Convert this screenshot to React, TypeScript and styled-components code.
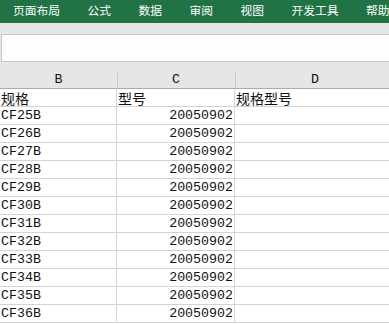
import styled, { createGlobalStyle } from 'styled-components';

const Global = createGlobalStyle`
  html, body {
    margin: 0;
    padding: 0;
    background: #ffffff;
    overflow: hidden;
  }
`;

const Page = styled.div`
  width: 389px;
  height: 324px;
  overflow: hidden;
  display: flex;
  flex-direction: column;
`;

const Ribbon = styled.div`
  height: 23px;
  background: #217346;
  display: flex;
  align-items: center;
  gap: 27.5px;
  padding-left: 13px;
  white-space: nowrap;
  overflow: hidden;
`;

const Tab = styled.span`
  color: #ffffff;
  font-family: "Noto Sans CJK SC", sans-serif;
  font-size: 11.75px;
  line-height: 14px;
  margin-top: -3px;
  flex-shrink: 0;
`;

const FormulaArea = styled.div`
  background: #e6e6e6;
  padding: 11px 0 9px 1px;
`;

const FormulaBox = styled.div`
  height: 26px;
  width: 400px;
  background: #fdfdfd;
  border: 1px solid #c6c6c6;
  border-right: none;
`;

const Grid = styled.div`
  display: grid;
  grid-template-columns: 117px 118px 160px;
  font-family: "Liberation Mono", "Noto Sans CJK SC", monospace;
  font-size: 13.3px;
  color: #111;
`;

const HeadCell = styled.div`
  height: 17px;
  background: #e6e6e6;
  border-bottom: 1px solid #ababab;
  display: flex;
  justify-content: center;
  align-items: flex-end;
  position: relative;
  line-height: 16px;
  &:not(:first-child)::before {
    content: "";
    position: absolute;
    left: 0;
    top: 2px;
    bottom: 0;
    width: 1px;
    background: #c8c8c8;
  }
`;

const Cell = styled.div<{ $num?: boolean }>`
  height: 17px;
  border-bottom: 1px solid #d4d4d4;
  border-right: 1px solid #d4d4d4;
  padding: 0 ${(p) => (p.$num ? '1px' : '0')} 0 ${(p) => (p.$num ? '0' : '1px')};
  text-align: ${(p) => (p.$num ? 'right' : 'left')};
  line-height: 18px;
  white-space: nowrap;
  overflow: hidden;
`;

const Cjk = styled.span`
  font-family: "Noto Sans CJK SC", sans-serif;
  font-size: 14px;
`;

const tabs = ['页面布局', '公式', '数据', '审阅', '视图', '开发工具', '帮助'];
const rows = Array.from({ length: 12 }, (_, i) => `CF${25 + i}B`);

export default function App() {
  return (
    <Page>
      <Global />
      <Ribbon>
        {tabs.map((t) => (
          <Tab key={t}>{t}</Tab>
        ))}
      </Ribbon>
      <FormulaArea>
        <FormulaBox />
      </FormulaArea>
      <Grid>
        <HeadCell>B</HeadCell>
        <HeadCell>C</HeadCell>
        <HeadCell>D</HeadCell>
        <Cell><Cjk>规格</Cjk></Cell>
        <Cell><Cjk>型号</Cjk></Cell>
        <Cell><Cjk>规格型号</Cjk></Cell>
        {rows.map((r) => (
          <>
            <Cell key={r}>{r}</Cell>
            <Cell $num>20050902</Cell>
            <Cell />
          </>
        ))}
      </Grid>
    </Page>
  );
}
